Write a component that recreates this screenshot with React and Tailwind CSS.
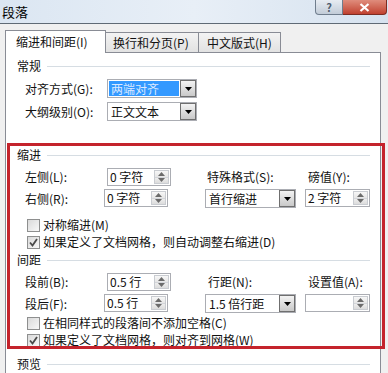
import React from "react";

const Up = () => (
  <svg width="7" height="4" viewBox="0 0 7 4">
    <path d="M0 4 L3.5 0 L7 4Z" fill="#6b6b6b" />
  </svg>
);

const Down = ({ color = "#6b6b6b" }) => (
  <svg width="7" height="4" viewBox="0 0 7 4">
    <path d="M0 0 L3.5 4 L7 0Z" fill={color} />
  </svg>
);

function Spin({ value, wide }) {
  return (
    <div
      className={`${wide ? "w-[65px]" : "w-[64px]"} h-full flex items-stretch border border-[#abadb3] bg-white`}
    >
      <div className="flex-1 flex items-center pl-[2px] whitespace-pre">{value}</div>
      <div className="w-[15px] my-[1px] mr-[1px] flex flex-col border border-[#c9ccd1]">
        <div className="flex-1 flex items-center justify-center bg-gradient-to-b from-[#f7f7f7] to-[#e6e6e6] border-b border-[#d4d6da]">
          <Up />
        </div>
        <div className="flex-1 flex items-center justify-center bg-gradient-to-b from-[#eeeeee] to-[#dcdcdc]">
          <Down />
        </div>
      </div>
    </div>
  );
}

function Select({ value, selected, wide }) {
  return (
    <div
      className={`${wide ? "w-[91px]" : "w-[90px]"} h-full flex items-stretch border border-[#abadb3] bg-white`}
    >
      <div className="flex-1 p-[1px] flex">
        <div
          className={`flex-1 flex items-center pl-[2px] whitespace-pre ${
            selected ? "bg-[#3399ff] text-[#dbe9ff]" : ""
          }`}
        >
          {value}
        </div>
      </div>
      <div className="w-[16px] flex items-center justify-center border border-[#6f6f6f] bg-gradient-to-b from-[#f3f3f3] to-[#c9c9c9]">
        <Down color="#000" />
      </div>
    </div>
  );
}

function Check({ checked, label }) {
  return (
    <div className="h-[14px] flex items-center pl-[10px]">
      <div className="w-[13px] h-[13px] border border-[#8e8f8f] bg-gradient-to-br from-[#dadada] to-[#f8f8f8] flex items-center justify-center">
        {checked && (
          <svg width="9" height="9" viewBox="0 0 9 9">
            <path d="M1 4.5 L3.5 7.5 L8 1" stroke="#4a4a4a" strokeWidth="1.8" fill="none" />
          </svg>
        )}
      </div>
      <span className="ml-[3px]">{label}</span>
    </div>
  );
}

function Heading({ children }) {
  return (
    <div className="h-[14px] flex items-center">
      <span>{children}</span>
      <div className="flex-1 h-px bg-[#d6dde3] ml-[6px]" />
    </div>
  );
}

export default function App() {
  return (
    <div className="relative w-[388px] h-[373px] overflow-hidden bg-[#f0f0f0] text-[12px] leading-[14px] text-[#111] font-['Noto_Sans_CJK_SC','Noto_Sans',sans-serif]">
      {/* 标题栏 */}
      <div className="h-[24px] flex items-start justify-between border-b border-[#5f6a75] bg-gradient-to-r from-[#dbe6f2] via-[#e8eff7] to-[#d6e2ef]">
        <div className="pl-[2px] pt-[4px] text-[13px] leading-[15px] text-black">段落</div>
        <div className="flex mr-[1px]">
          <div className="w-[28px] h-[15px] flex items-center justify-center rounded-bl-[4px] border border-t-0 border-[#6f7d8d] bg-gradient-to-b from-[#e7ecf2] to-[#c2ccd8] text-[11px] leading-[11px] text-[#4f5d6e] font-bold">
            ?
          </div>
          <div className="w-[44px] h-[15px] flex items-center justify-center rounded-br-[4px] border border-t-0 border-l-0 border-[#7c2c22] bg-gradient-to-b from-[#df8c7c] to-[#c0402f]">
            <svg width="11" height="9" viewBox="0 0 11 9">
              <path d="M1.5 1 L9.5 8 M9.5 1 L1.5 8" stroke="#fff" strokeWidth="2.2" />
            </svg>
          </div>
        </div>
      </div>

      {/* 标签页 */}
      <div className="mt-[6px] pl-[5px] h-[22px] flex items-end relative z-10">
        <div className="h-[23px] -mb-px w-[101px] flex items-center pl-[10px] bg-white border border-b-0 border-[#898c95]">
          缩进和间距(I)
        </div>
        <div className="h-[20px] w-[93px] flex items-center pl-[7px] bg-gradient-to-b from-[#f3f3f3] to-[#e2e2e2] border border-b-0 border-l-0 border-[#898c95]">
          换行和分页(P)
        </div>
        <div className="h-[20px] w-[82px] flex items-center pl-[8px] bg-gradient-to-b from-[#f3f3f3] to-[#e2e2e2] border border-b-0 border-l-0 border-[#898c95]">
          中文版式(H)
        </div>
      </div>

      {/* 面板 */}
      <div className="ml-[5px] w-[376px] h-[330px] bg-white border border-[#898c95] pl-[11px] pr-[10px] pt-[6px]">
        <Heading>常规</Heading>
        <div className="mt-[6px] h-[19px] flex pl-[8px]">
          <div className="w-[82px] flex items-center">对齐方式(G):</div>
          <Select value="两端对齐" selected />
        </div>
        <div className="mt-[4px] h-[19px] flex pl-[8px]">
          <div className="w-[82px] flex items-center">大纲级别(O):</div>
          <Select value="正文文本" />
        </div>

        <div className="mt-[27px]">
          <Heading>缩进</Heading>
        </div>
        <div className="mt-[6px] h-[18px] flex pl-[8px]">
          <div className="w-[82px] flex items-center">左侧(L):</div>
          <Spin value="0 字符" />
          <div className="ml-[36px] w-[101px] flex items-center">特殊格式(S):</div>
          <div className="flex items-center">磅值(Y):</div>
        </div>
        <div className="mt-[3px] h-[19px] flex pl-[8px]">
          <div className="w-[82px] flex items-center">右侧(R):</div>
          <div className="h-[18px] flex">
            <Spin value="0 字符" />
          </div>
          <div className="ml-[37px] flex">
            <Select value="首行缩进" wide />
          </div>
          <div className="ml-[9px] h-[18px] flex">
            <Spin value="2 字符" wide />
          </div>
        </div>
        <div className="mt-[10px]">
          <Check label="对称缩进(M)" />
        </div>
        <div className="mt-[3px]">
          <Check checked label="如果定义了文档网格，则自动调整右缩进(D)" />
        </div>

        <div className="mt-[4px]">
          <Heading>间距</Heading>
        </div>
        <div className="mt-[6px] h-[18px] flex pl-[8px]">
          <div className="w-[82px] flex items-center">段前(B):</div>
          <Spin value="0.5 行" />
          <div className="ml-[37px] w-[100px] flex items-center">行距(N):</div>
          <div className="flex items-center">设置值(A):</div>
        </div>
        <div className="mt-[3px] h-[19px] flex pl-[8px]">
          <div className="w-[82px] flex items-center">段后(F):</div>
          <div className="h-[18px] flex">
            <Spin value="0.5 行" />
          </div>
          <div className="ml-[37px] flex">
            <Select value="1.5 倍行距" wide />
          </div>
          <div className="ml-[9px] h-[18px] flex">
            <Spin value="" wide />
          </div>
        </div>
        <div className="mt-[3px]">
          <Check label="在相同样式的段落间不添加空格(C)" />
        </div>
        <div className="mt-[3px]">
          <Check checked label="如果定义了文档网格，则对齐到网格(W)" />
        </div>

        <div className="mt-[10px]">
          <Heading>预览</Heading>
        </div>
      </div>

      {/* 红色标注框 */}
      <div className="absolute left-[7px] top-[143px] w-[378px] h-[206px] border-[3px] border-[#c4232c] pointer-events-none" />
    </div>
  );
}
